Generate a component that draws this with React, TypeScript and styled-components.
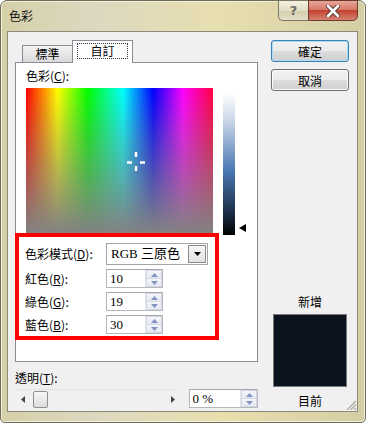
import styled, { createGlobalStyle } from 'styled-components';

const GlobalStyle = createGlobalStyle`
  html, body {
    margin: 0;
    padding: 0;
    background: #ffffff;
  }
  body {
    font-family: "Liberation Serif", "Noto Sans CJK TC", serif;
    font-size: 12px;
    color: #000000;
  }
  * {
    box-sizing: border-box;
  }
`;

const rows = [
  { label: '紅色', key: 'R', value: '10' },
  { label: '綠色', key: 'G', value: '19' },
  { label: '藍色', key: 'B', value: '30' },
];

function Spin() {
  return (
    <SpinBox>
      <SpinHalf>
        <svg width="7" height="4" viewBox="0 0 7 4">
          <path d="M0 4 L3.5 0 L7 4 Z" fill="#8592c4" />
        </svg>
      </SpinHalf>
      <SpinHalf>
        <svg width="7" height="4" viewBox="0 0 7 4">
          <path d="M0 0 L3.5 4 L7 0 Z" fill="#8592c4" />
        </svg>
      </SpinHalf>
    </SpinBox>
  );
}

function App() {
  return (
    <>
      <GlobalStyle />
      <Frame>
        <TitleBar>
          <Title>色彩</Title>
          <Caption>
            <HelpButton>?</HelpButton>
            <CloseButton>
              <svg width="14" height="12" viewBox="0 0 14 12">
                <path
                  d="M2 1 L12 11 M12 1 L2 11"
                  stroke="#4a3030"
                  strokeWidth="4.5"
                  strokeLinecap="round"
                />
                <path
                  d="M2 1 L12 11 M12 1 L2 11"
                  stroke="#ffffff"
                  strokeWidth="2.6"
                  strokeLinecap="round"
                />
              </svg>
            </CloseButton>
          </Caption>
        </TitleBar>

        <Client>
          <LeftColumn>
            <Tabs>
              <Tab>標準</Tab>
              <Tab $active>
                <Focus>自訂</Focus>
              </Tab>
            </Tabs>
            <Panel>
              <Label>
                色彩(<u>C</u>):
              </Label>
              <SpectrumRow>
                <Spectrum>
                  <Crosshair width="19" height="21" viewBox="0 0 19 21">
                    <path
                      d="M0 10.5 H5 M13 10.5 H18 M9 0 V5 M9 14 V19"
                      stroke="#ffffff"
                      strokeWidth="2.4"
                    />
                  </Crosshair>
                </Spectrum>
                <LumBar />
                <Pointer />
              </SpectrumRow>
              <RedBox>
                <FormRow>
                  <RowLabel>
                    色彩模式(<u>D</u>):
                  </RowLabel>
                  <Select>
                    <SelectText>RGB 三原色</SelectText>
                    <DropButton>
                      <svg width="7" height="4" viewBox="0 0 7 4">
                        <path d="M0 0 L3.5 4 L7 0 Z" fill="#000000" />
                      </svg>
                    </DropButton>
                  </Select>
                </FormRow>
                {rows.map((row) => (
                  <FormRow key={row.key}>
                    <RowLabel>
                      {row.label}(<u>{row.key}</u>):
                    </RowLabel>
                    <NumberInput $width={57}>
                      <InputText>{row.value}</InputText>
                      <Spin />
                    </NumberInput>
                  </FormRow>
                ))}
              </RedBox>
            </Panel>

            <AlphaLabel>
              透明(<u>T</u>):
            </AlphaLabel>
            <AlphaRow>
              <Slider>
                <svg width="4" height="7" viewBox="0 0 4 7">
                  <path d="M4 0 L0 3.5 L4 7 Z" fill="#444444" />
                </svg>
                <Thumb />
                <SliderSpace />
                <svg width="4" height="7" viewBox="0 0 4 7">
                  <path d="M0 0 L4 3.5 L0 7 Z" fill="#444444" />
                </svg>
              </Slider>
              <NumberInput $width={70}>
                <InputText>0 %</InputText>
                <Spin />
              </NumberInput>
            </AlphaRow>
          </LeftColumn>

          <RightColumn>
            <Button $default>確定</Button>
            <Button>取消</Button>
            <Spacer />
            <SwatchLabel>新增</SwatchLabel>
            <Swatch />
            <SwatchLabel $last>目前</SwatchLabel>
          </RightColumn>

          <Grip width="11" height="10" viewBox="0 0 11 10">
            <path
              d="M10 1 L1 10 M10 4.5 L4.5 10 M10 8 L8 10"
              stroke="#a8a8a0"
              strokeWidth="1.2"
            />
          </Grip>
        </Client>
      </Frame>
    </>
  );
}

export default App;

const Frame = styled.div`
  width: 366px;
  height: 423px;
  display: flex;
  flex-direction: column;
  padding: 0 7px 10px 6px;
  border: 1px solid #6f6c58;
  border-radius: 7px 7px 5px 5px;
  background: linear-gradient(
    to right,
    #d6d0a8 0%,
    #dcd8c0 25%,
    #e8dfaf 60%,
    #d5cea4 100%
  );
  box-shadow: inset 0 0 0 1px #f1eedb;
`;

const TitleBar = styled.div`
  height: 30px;
  display: flex;
  justify-content: space-between;
  align-items: flex-start;
`;

const Title = styled.div`
  padding: 7px 0 0 2px;
  font-family: "Noto Sans CJK TC", sans-serif;
  font-size: 12px;
  line-height: 16px;
  color: #111111;
`;

const Caption = styled.div`
  display: flex;
  margin-top: -1px;
`;

const HelpButton = styled.div`
  width: 30px;
  height: 21px;
  display: flex;
  align-items: center;
  justify-content: center;
  border: 1px solid #7a7762;
  border-right: none;
  border-radius: 0 0 0 5px;
  background: linear-gradient(#f4f1e2, #e2ddc4 50%, #d4cead 51%, #e3dec6);
  font-family: "DejaVu Sans", sans-serif;
  font-size: 13px;
  font-weight: bold;
  color: #6a6a6a;
`;

const CloseButton = styled.div`
  width: 50px;
  height: 21px;
  display: flex;
  align-items: center;
  justify-content: center;
  border: 1px solid #6d3a30;
  border-radius: 0 0 5px 0;
  background: linear-gradient(#e8a597, #d67a6a 45%, #c2422f 50%, #d4826f);
`;

const Client = styled.div`
  position: relative;
  flex: 1;
  display: flex;
  padding: 8px 8px 0 7px;
  background: #f0f0f0;
  border: 1px solid #8c8a78;
`;

const LeftColumn = styled.div`
  width: 243px;
  display: flex;
  flex-direction: column;
`;

const Tabs = styled.div`
  height: 23px;
  display: flex;
  align-items: flex-end;
  padding-left: 7px;
  position: relative;
  z-index: 1;
`;

const Tab = styled.div<{ $active?: boolean }>`
  height: ${(p) => (p.$active ? '23px' : '18px')};
  width: ${(p) => (p.$active ? '61px' : '50px')};
  display: flex;
  align-items: ${(p) => (p.$active ? 'flex-start' : 'center')};
  justify-content: center;
  padding-top: ${(p) => (p.$active ? '2px' : '0')};
  border: 1px solid #898c95;
  border-bottom: ${(p) => (p.$active ? 'none' : '1px solid #898c95')};
  border-right: ${(p) => (p.$active ? '1px solid #898c95' : 'none')};
  background: ${(p) =>
    p.$active ? '#ffffff' : 'linear-gradient(#f2f2f2, #e6e6e6 50%, #d9d9d9)'};
  font-family: "Noto Sans CJK TC", sans-serif;
  font-size: 12px;
  line-height: 16px;
`;

const Focus = styled.span`
  display: block;
  width: 51px;
  text-align: center;
  border: 1px dotted #333333;
  line-height: 14px;
`;

const Panel = styled.div`
  height: 300px;
  margin-top: -1px;
  padding: 5px 10px 0 10px;
  background: #ffffff;
  border: 1px solid #898c95;
`;

const Label = styled.div`
  height: 20px;
  line-height: 16px;
  font-family: "Noto Sans CJK TC", sans-serif;
`;

const SpectrumRow = styled.div`
  display: flex;
  align-items: flex-start;
`;

const Spectrum = styled.div`
  position: relative;
  width: 187px;
  height: 145px;
  background:
    linear-gradient(to bottom, rgba(128, 128, 128, 0), #828282),
    linear-gradient(
      to right,
      #ff0000 0%,
      #ffff00 17%,
      #00ff00 33%,
      #00ffff 52%,
      #0000ff 68%,
      #ff00ff 84%,
      #ff0040 100%
    );
`;

const Crosshair = styled.svg`
  position: absolute;
  left: 101px;
  top: 64px;
`;

const LumBar = styled.div`
  width: 12px;
  height: 142px;
  margin: 5px 0 0 10px;
  background: linear-gradient(
    to bottom,
    #ffffff 0%,
    #c8d6e8 20%,
    #4a78b2 55%,
    #1a2c44 85%,
    #000000 100%
  );
`;

const Pointer = styled.div`
  width: 0;
  height: 0;
  align-self: flex-end;
  margin: 0 0 3px 4px;
  border-top: 4px solid transparent;
  border-bottom: 4px solid transparent;
  border-right: 7px solid #000000;
`;

const RedBox = styled.div`
  position: relative;
  width: 204px;
  height: 107px;
  margin: -2px 0 0 -11px;
  padding: 6px 0 0 6px;
  border: 4px solid #ff0000;
  display: flex;
  flex-direction: column;
  gap: 4px;
`;

const FormRow = styled.div`
  display: flex;
  align-items: center;
`;

const RowLabel = styled.div`
  width: 81px;
  line-height: 16px;
  font-family: "Noto Sans CJK TC", sans-serif;
`;

const Select = styled.div`
  width: 102px;
  height: 22px;
  display: flex;
  align-items: center;
  padding: 1px;
  border: 1px solid #a5a5a5;
  background: #ffffff;
`;

const SelectText = styled.div`
  flex: 1;
  padding-left: 3px;
  font-size: 13px;
  line-height: 16px;
`;

const DropButton = styled.div`
  width: 18px;
  height: 18px;
  display: flex;
  align-items: center;
  justify-content: center;
  border: 1px solid #8a8a8a;
  background: linear-gradient(#f6f6f6, #e2e2e2);
`;

const NumberInput = styled.div<{ $width: number }>`
  width: ${(p) => p.$width}px;
  height: 19px;
  display: flex;
  border: 1px solid #b5b7bd;
  border-top-color: #a3a5aa;
  background: #ffffff;
`;

const InputText = styled.div`
  flex: 1;
  padding-left: 3px;
  font-size: 13px;
  line-height: 17px;
`;

const SpinBox = styled.div`
  width: 17px;
  display: flex;
  flex-direction: column;
  border-left: 1px solid #e2e5ec;
`;

const SpinHalf = styled.div`
  flex: 1;
  display: flex;
  align-items: center;
  justify-content: center;
  background: linear-gradient(#f4f6fa, #e4e8f1);
  border: 1px solid #d4d9e4;
  &:first-child {
    border-bottom: none;
  }
`;

const AlphaLabel = styled.div`
  margin-top: 8px;
  line-height: 16px;
  font-family: "Noto Sans CJK TC", sans-serif;
`;

const AlphaRow = styled.div`
  margin-top: 3px;
  display: flex;
  align-items: center;
  gap: 10px;
`;

const Slider = styled.div`
  width: 165px;
  height: 19px;
  display: flex;
  align-items: center;
  padding: 0 4px 0 6px;
  border-top: 1px solid #e4e4e4;
`;

const Thumb = styled.div`
  width: 15px;
  height: 17px;
  margin-left: 8px;
  border: 1px solid #8f8f8f;
  border-radius: 2px;
  background: linear-gradient(#f7f7f7, #dcdcdc);
`;

const SliderSpace = styled.div`
  flex: 1;
`;

const RightColumn = styled.div`
  width: 78px;
  margin-left: 13px;
  display: flex;
  flex-direction: column;
  align-items: center;
`;

const Button = styled.div<{ $default?: boolean }>`
  width: 78px;
  height: 22px;
  margin-bottom: 7px;
  display: flex;
  align-items: center;
  justify-content: center;
  border: 1px solid ${(p) => (p.$default ? '#3c7fb1' : '#707070')};
  border-radius: 3px;
  background: linear-gradient(#f2f2f2, #ebebeb 50%, #dddddd 51%, #cfcfcf);
  box-shadow: inset 0 0 0 1px ${(p) => (p.$default ? '#a9dbf6' : '#fbfbfb')};
  font-family: "Noto Sans CJK TC", sans-serif;
  font-size: 12px;
`;

const Spacer = styled.div`
  flex: 1;
`;

const SwatchLabel = styled.div<{ $last?: boolean }>`
  line-height: 16px;
  margin-bottom: ${(p) => (p.$last ? '2px' : '4px')};
  font-family: "Noto Sans CJK TC", sans-serif;
`;

const Swatch = styled.div`
  width: 74px;
  height: 73px;
  margin-bottom: 6px;
  border: 1px solid #7a7a7a;
  background: #0a131e;
`;

const Grip = styled.svg`
  position: absolute;
  right: 0;
  bottom: 1px;
`;
